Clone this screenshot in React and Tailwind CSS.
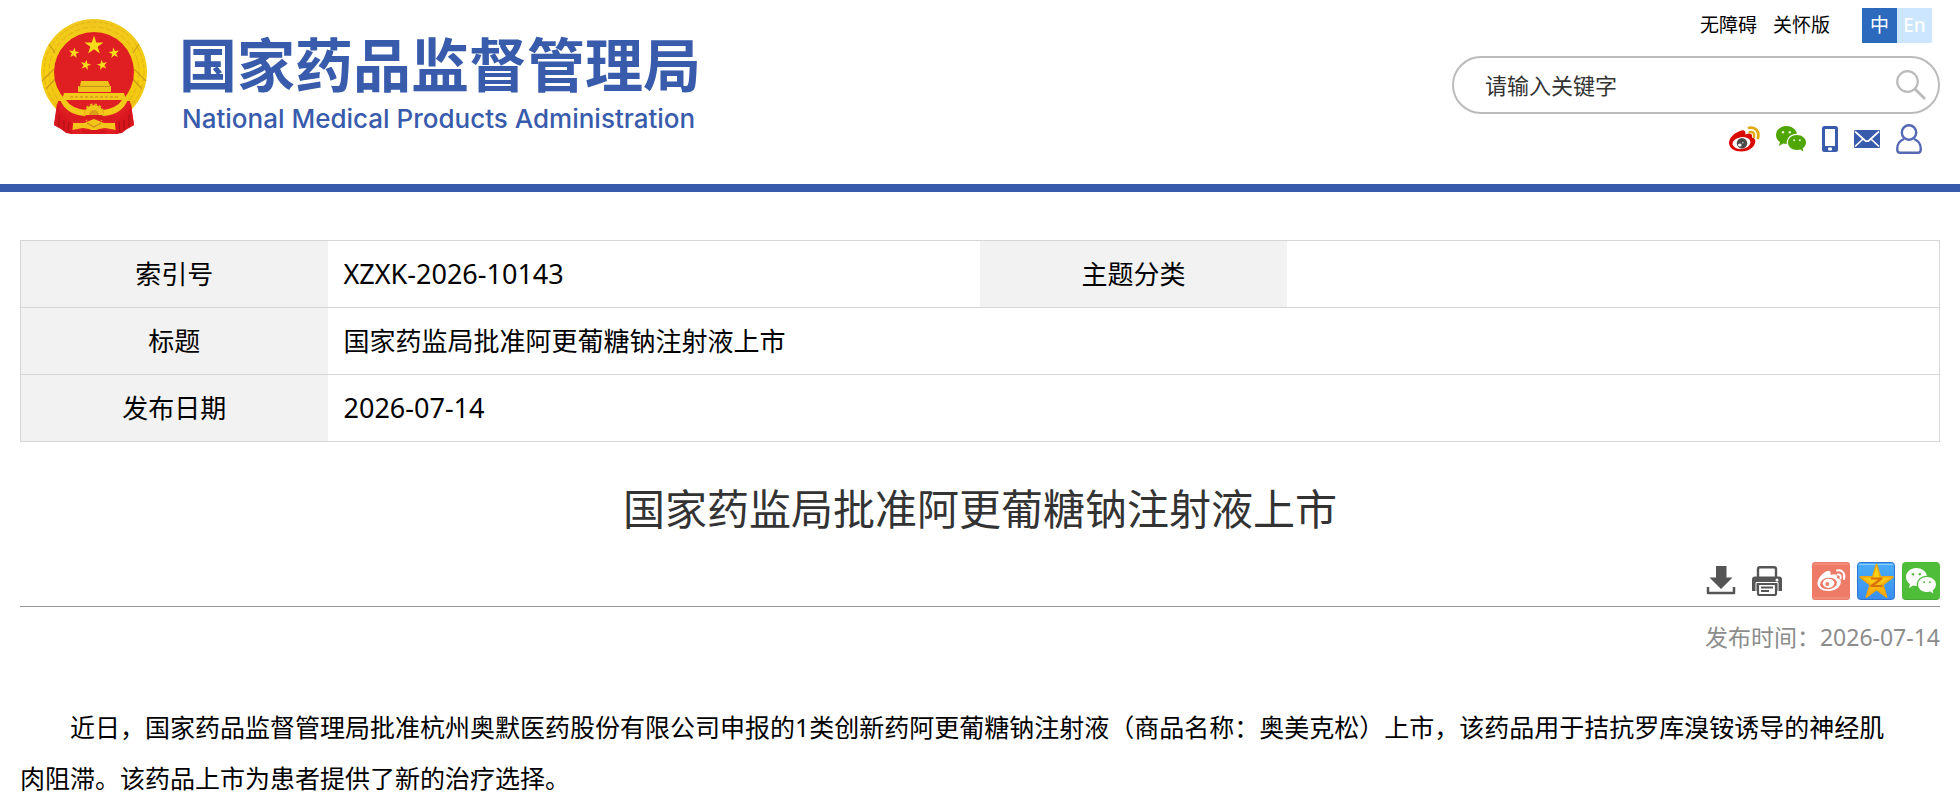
import React from "react";

const STAR = "M0 -10 L2.25 -3.1 L9.5 -3.1 L3.65 1.2 L5.9 8.1 L0 3.85 L-5.9 8.1 L-3.65 1.2 L-9.5 -3.1 L-2.25 -3.1 Z";

function Emblem() {
  return (
    <svg viewBox="0 0 106 116" className="w-[106px] h-[116px] flex-shrink-0" aria-hidden="true">
      <defs>
        <linearGradient id="gold" x1="0" y1="0" x2="0" y2="1">
          <stop offset="0" stopColor="#f0c81e" />
          <stop offset="0.5" stopColor="#f6cf10" />
          <stop offset="1" stopColor="#efc015" />
        </linearGradient>
      </defs>
      <circle cx="53" cy="53" r="53" fill="url(#gold)" />
      <circle cx="53" cy="53" r="50" fill="none" stroke="#e3b216" strokeWidth="1" strokeDasharray="4 2" />
      <circle cx="53" cy="53" r="45" fill="none" stroke="#e6b816" strokeWidth="1.2" strokeDasharray="6 2" />
      <path d="M8 25 L14 34 M98 25 L92 34 M1 62 L13 50 M105 62 L93 50 M5 70 L16 58 M101 70 L90 58" stroke="#cf9c17" strokeWidth="1.2" />
      <circle cx="53" cy="53" r="40" fill="#e01f22" />
      <g fill="#f8dc1c">
        <path d={STAR} transform="translate(53 26.5)" />
        <path d={STAR} transform="translate(33 34) rotate(8) scale(.56)" />
        <path d={STAR} transform="translate(73 34) rotate(-8) scale(.56)" />
        <path d={STAR} transform="translate(44.7 46) rotate(12) scale(.54)" />
        <path d={STAR} transform="translate(61.3 46) rotate(-12) scale(.54)" />
      </g>
      <path d="M17 82 H89 L93 106 L86 110 L76 115 H30 L20 110 L13 106 Z" fill="#df1f23" />
      <path d="M40 62 H67 L69 67 H70 V73 H37 V67 H39 Z" fill="#eec41c" />
      <path d="M38 67.5 H69" stroke="#c99117" strokeWidth="1" />
      <path d="M23 74 H83 L85 81 H21 Z" fill="#f3c81b" />
      <path d="M29 78 H79" stroke="#d39a18" strokeWidth="1.4" strokeDasharray="3 2" />
      <path d="M19 80 Q24 95 43 97 L44 91 Q30 89 25 81 Z M87 80 Q82 95 63 97 L62 91 Q76 89 81 81 Z" fill="#f4ca18" />
      <path d="M43 96 A10 10 0 0 1 63 96 Z" fill="#f4c51a" />
      <circle cx="53" cy="95" r="9.5" fill="none" stroke="#e9bb16" strokeWidth="2" strokeDasharray="2.5 2" />
      <path d="M48 96 A5 5 0 0 1 58 96 Z" fill="#dd9c18" />
      <path d="M17 89 Q32 101 53 96 Q74 101 89 89 L91 96 Q72 106 53 99 Q34 106 15 96 Z" fill="#dc1b20" />
      <path d="M32 104 H43 L53 100 L63 104 H74 L75 111 L64 109 L58 110 L53 112 L48 110 L42 109 L31 111 Z" fill="#f3c51a" />
      <path d="M46 104 L53 108 L60 104" fill="none" stroke="#cc8e18" strokeWidth="1.3" />
      <path d="M16 84 Q20 98 32 103 L31 115 L25 114 L20 110 L13 106 Z M90 84 Q86 98 74 103 L75 115 L81 114 L86 110 L93 106 Z" fill="#d9161d" />
      <path d="M18 96 L18 108 M23 101 L23 111 M28 103 L27 113 M88 96 L88 108 M83 101 L83 111 M78 103 L79 113" stroke="#a90f16" strokeWidth="1" />
      <path d="M41 113 H65" stroke="#d9161d" strokeWidth="4" />
    </svg>
  );
}

function WeiboIcon() {
  return (
    <svg viewBox="0 0 31 26" className="w-[31px] h-[26px]" aria-hidden="true">
      <path d="M11 5 C14 3.5 17 4 16.5 8.5 C20 7 24 7 23 11.5 C26 12.5 27 14 26 17 C24.5 22.5 18.5 25.5 12.5 25.5 C5.5 25.5 0 22 0 17 C0 12 5 7 11 5 Z" fill="#d90a06" />
      <ellipse cx="12.5" cy="17" rx="9" ry="5.8" fill="#fff" transform="rotate(-8 12.5 17)" />
      <circle cx="13" cy="17.3" r="5.2" fill="#4a4a4a" />
      <ellipse cx="10.8" cy="19" rx="1.8" ry="1.5" fill="#fff" />
      <circle cx="13.8" cy="16.8" r=".8" fill="#ddd" />
      <path d="M20 1.8 C26.5 .5 30.5 5 29 12" fill="none" stroke="#e0ac10" strokeWidth="2.8" strokeLinecap="round" />
      <path d="M20.5 6.2 C24 5.2 26 7.5 25 10.8" fill="none" stroke="#e0ac10" strokeWidth="2.4" strokeLinecap="round" />
    </svg>
  );
}

function WechatIcon({ className, color, eyes }) {
  return (
    <svg viewBox="0 0 30 26" className={className} aria-hidden="true">
      <path d="M10.5 0 C4.5 0 0 4 0 9 C0 12 1.5 14.5 4 16 L3 20 L7.2 17.6 C8.3 17.9 9.5 18 10.8 18 C10 12 15 7.5 20.9 7.7 C20 3.2 15.5 0 10.5 0 Z" fill={color} />
      <path d="M20.9 9 C15.8 9 12 12.3 12 16.6 C12 21 16 24.1 20.9 24.1 C22 24.1 23.2 23.9 24.2 23.6 L27.4 25.5 L26.6 22.4 C28.7 21 30 19 30 16.6 C30 12.3 26 9 20.9 9 Z" fill={color} />
      <g fill={eyes}>
        <circle cx="7" cy="6.3" r="1.2" />
        <circle cx="13.8" cy="6.3" r="1.2" />
        <circle cx="18.2" cy="14.3" r="1" />
        <circle cx="23.8" cy="14.3" r="1" />
      </g>
    </svg>
  );
}

function PhoneIcon() {
  return (
    <svg viewBox="0 0 16 26" className="w-4 h-[26px]" aria-hidden="true">
      <rect width="16" height="26" rx="2.5" fill="#385bac" />
      <rect x="3" y="3" width="10" height="17" fill="#fff" />
      <rect x="6" y="21.5" width="4" height="3" rx="1" fill="#fff" />
    </svg>
  );
}

function MailIcon() {
  return (
    <svg viewBox="0 0 26 18" className="w-[26px] h-[18px]" aria-hidden="true">
      <rect width="26" height="18" rx="1" fill="#385bac" />
      <path d="M1 1.5 L11 10.5 Q13 12 15 10.5 L25 1.5 M1 16.5 L9 9 M25 16.5 L17 9" fill="none" stroke="#fff" strokeWidth="1.7" />
    </svg>
  );
}

function UserIcon() {
  return (
    <svg viewBox="0 0 26 30" className="w-[26px] h-[30px]" fill="none" stroke="#5468b4" strokeWidth="2.4" aria-hidden="true">
      <circle cx="13" cy="8.5" r="7.2" />
      <path d="M8 15 C4 16.5 1.2 20 1.2 25 C1.2 28 2 28.8 4 28.8 H22 C24 28.8 24.8 28 24.8 25 C24.8 20 22 16.5 18 15" />
    </svg>
  );
}

function SearchIcon() {
  return (
    <svg viewBox="0 0 30 30" className="w-[30px] h-[30px]" fill="none" stroke="#bbb" strokeWidth="2.2" aria-hidden="true">
      <circle cx="11.5" cy="11.5" r="10.3" />
      <path d="M19 19 L29 29" strokeWidth="2.8" />
    </svg>
  );
}

function DownloadIcon() {
  return (
    <svg viewBox="0 0 30 30" className="w-[30px] h-[30px]" aria-hidden="true">
      <path d="M10 0 H20.5 V11.5 H26.5 L15 23 L3.5 11.5 H10 Z" fill="#555" />
      <path d="M2 21 V27 H28 V21" fill="none" stroke="#555" strokeWidth="2.5" strokeLinejoin="round" />
    </svg>
  );
}

function PrintIcon() {
  return (
    <svg viewBox="0 0 30 30" className="w-[30px] h-[30px]" aria-hidden="true">
      <path d="M6 11 V3 Q6 1.2 8 1.2 H22 Q24 1.2 24 3 V11" fill="none" stroke="#555" strokeWidth="2.4" />
      <path d="M3 10.5 H27 Q30 10.5 30 13.5 V25 H0 V13.5 Q0 10.5 3 10.5 Z" fill="#555" />
      <circle cx="25" cy="14" r="1.5" fill="#fff" />
      <path d="M4 26 V16.500 H26 V26" fill="none" stroke="#fff" strokeWidth="1" />
      <rect x="6" y="18" width="18" height="11" rx="1.5" fill="#fff" stroke="#555" strokeWidth="2.2" />
      <path d="M9 21.5 H21 M9 25 H17" stroke="#555" strokeWidth="1.8" />
    </svg>
  );
}

function WeiboShare() {
  return (
    <svg viewBox="0 0 38 38" className="w-[38px] h-[38px]" aria-hidden="true">
      <rect width="38" height="38" rx="3" fill="#ee7a68" />
      <path d="M1.5 2 H36.5 M1.5 36 H36.5" stroke="#f39b8c" strokeWidth="1" />
      <path d="M14 9.5 C17 8 19.5 9 18.5 13 C22 11.5 26 12 25 16 C28.5 17 29.5 19 28.5 22 C27 26.5 21.5 29 16 29 C10 29 5.5 26 5.5 21.5 C5.5 17 9.5 12 14 9.5 Z" fill="#fff" />
      <ellipse cx="16.5" cy="21.5" rx="8.5" ry="5.7" fill="#ee7a68" transform="rotate(-8 16.5 21.5)" />
      <ellipse cx="16.5" cy="21.3" rx="5.8" ry="4.6" fill="#fff" />
      <circle cx="15.3" cy="22" r="1.9" fill="#ee7a68" />
      <path d="M25 8.5 C30 7 33.5 11.5 32 17 M25.5 12.5 C28 12 29.2 14 28.5 16.5" fill="none" stroke="#fff" strokeWidth="2" strokeLinecap="round" />
    </svg>
  );
}

function QzoneShare() {
  return (
    <svg viewBox="0 0 38 38" className="w-[38px] h-[38px]" aria-hidden="true">
      <defs>
        <linearGradient id="sky" x1="0" y1="0" x2="0" y2="1">
          <stop offset="0" stopColor="#4aaef8" />
          <stop offset="1" stopColor="#3a8eee" />
        </linearGradient>
        <linearGradient id="star" x1="0" y1="0" x2="0" y2="1">
          <stop offset="0" stopColor="#ffe81a" />
          <stop offset="1" stopColor="#f9a30a" />
        </linearGradient>
      </defs>
      <rect x=".5" y=".5" width="37" height="37" rx="3" fill="url(#sky)" stroke="#2f74d0" />
      <path d="M2 2.5 H36" stroke="#8fcdfb" strokeWidth="1" />
      <path d={STAR} transform="translate(19.5 20.5) scale(1.72 1.8)" fill="url(#star)" stroke="#f0a810" strokeWidth="1" strokeLinejoin="round" />
      <path d="M14 16.5 H24.5 L14.5 24 H25.5" fill="none" stroke="#d9700c" strokeWidth="2.2" strokeLinejoin="round" />
    </svg>
  );
}

function WechatShare() {
  return (
    <span className="w-[38px] h-[38px] rounded-sm bg-[#50bd3a] flex items-center justify-center border-b border-[#46a833]">
      <WechatIcon className="w-[30px] h-[26px]" color="#fff" eyes="#50bd3a" />
    </span>
  );
}

const quickLinks = [
  { label: "微博", icon: <WeiboIcon /> },
  { label: "微信", icon: <WechatIcon className="w-[30px] h-[26px]" color="#4fa600" eyes="#e4f5cf" /> },
  { label: "手机版", icon: <PhoneIcon /> },
  { label: "邮箱", icon: <MailIcon /> },
  { label: "个人中心", icon: <UserIcon /> },
];

function Header() {
  return (
    <header className="flex justify-between items-start h-48 border-b-8 border-[#385bac] pr-5">
      <a href="#" className="flex gap-8 pl-[41px] pt-[19px] text-[#385bac]">
        <Emblem />
        <span className="flex flex-col pt-3">
          <span className="text-[58px] leading-[68px] font-bold whitespace-nowrap">国家药品监督管理局</span>
          <span className="pl-[3px] font-['Inter',sans-serif] text-[26px] leading-10 font-medium whitespace-nowrap">
            National Medical Products Administration
          </span>
        </span>
      </a>

      <div className="flex flex-col items-end pt-2">
        <div className="flex items-center gap-4 mr-2 text-[19px]">
          <a href="#">无障碍</a>
          <a href="#">关怀版</a>
          <div className="flex ml-4 text-white">
            <button type="button" className="w-[35px] h-[35px] bg-[#2c6abd]">中</button>
            <button type="button" className="w-[35px] h-[35px] bg-[#cce6ff] font-medium">En</button>
          </div>
        </div>

        <form className="mt-[13px] flex items-center w-[488px] h-[58px] border-2 border-[#bbb] rounded-full pl-[31px] pr-3">
          <input
            type="text"
            aria-label="请输入关键字"
            placeholder="请输入关键字"
            className="flex-1 min-w-0 text-[22px] placeholder:text-[#333] outline-none"
          />
          <button type="button" aria-label="搜索">
            <SearchIcon />
          </button>
        </form>

        <div className="flex items-center gap-4 mt-[10px] mr-[18px]">
          {quickLinks.map((link) => (
            <a key={link.label} href="#" aria-label={link.label}>
              {link.icon}
            </a>
          ))}
        </div>
      </div>
    </header>
  );
}

function InfoTable() {
  const label = "w-[16%] bg-[#f2f2f2] font-normal text-center text-[26px]";
  const row = "h-[67px] border border-[#d6d6d6]";
  return (
    <table className="w-full table-fixed border-collapse mt-12">
      <tbody>
        <tr className={row}>
          <th scope="row" className={label}>索引号</th>
          <td className="w-[34%] px-4 text-[27px]">XZXK-2026-10143</td>
          <th scope="row" className={label}>主题分类</th>
          <td className="w-[34%] px-4"></td>
        </tr>
        <tr className={row}>
          <th scope="row" className={label}>标题</th>
          <td colSpan={3} className="px-4 text-[26px]">国家药监局批准阿更葡糖钠注射液上市</td>
        </tr>
        <tr className={row}>
          <th scope="row" className={label}>发布日期</th>
          <td colSpan={3} className="px-4 text-[27px]">2026-07-14</td>
        </tr>
      </tbody>
    </table>
  );
}

export default function App() {
  return (
    <div lang="zh-CN" className="min-h-screen bg-white text-black font-['Noto_Sans','Noto_Sans_CJK_SC',sans-serif]">
      <Header />
      <main className="px-5">
        <InfoTable />

        <h1 className="mt-9 text-center text-[42px] leading-[62px] text-[#333]">国家药监局批准阿更葡糖钠注射液上市</h1>

        <div className="flex justify-end items-center mt-[22px] pb-[6px] border-b border-[#999]">
          <div className="flex gap-4 mr-[30px]">
            <button type="button" aria-label="下载"><DownloadIcon /></button>
            <button type="button" aria-label="打印"><PrintIcon /></button>
          </div>
          <div className="flex gap-[7px]">
            <a href="#" aria-label="分享到微博"><WeiboShare /></a>
            <a href="#" aria-label="分享到QQ空间"><QzoneShare /></a>
            <a href="#" aria-label="分享到微信"><WechatShare /></a>
          </div>
        </div>

        <p className="mt-3 text-right text-[23px] leading-9 text-[#8c8c8c]">发布时间：2026-07-14</p>

        <p className="mt-[47px] pr-8 text-[25px] leading-[51px] indent-[50px]">
          近日，国家药品监督管理局批准杭州奥默医药股份有限公司申报的1类创新药阿更葡糖钠注射液（商品名称：奥美克松）上市，该药品用于拮抗罗库溴铵诱导的神经肌肉阻滞。该药品上市为患者提供了新的治疗选择。
        </p>
      </main>
    </div>
  );
}
